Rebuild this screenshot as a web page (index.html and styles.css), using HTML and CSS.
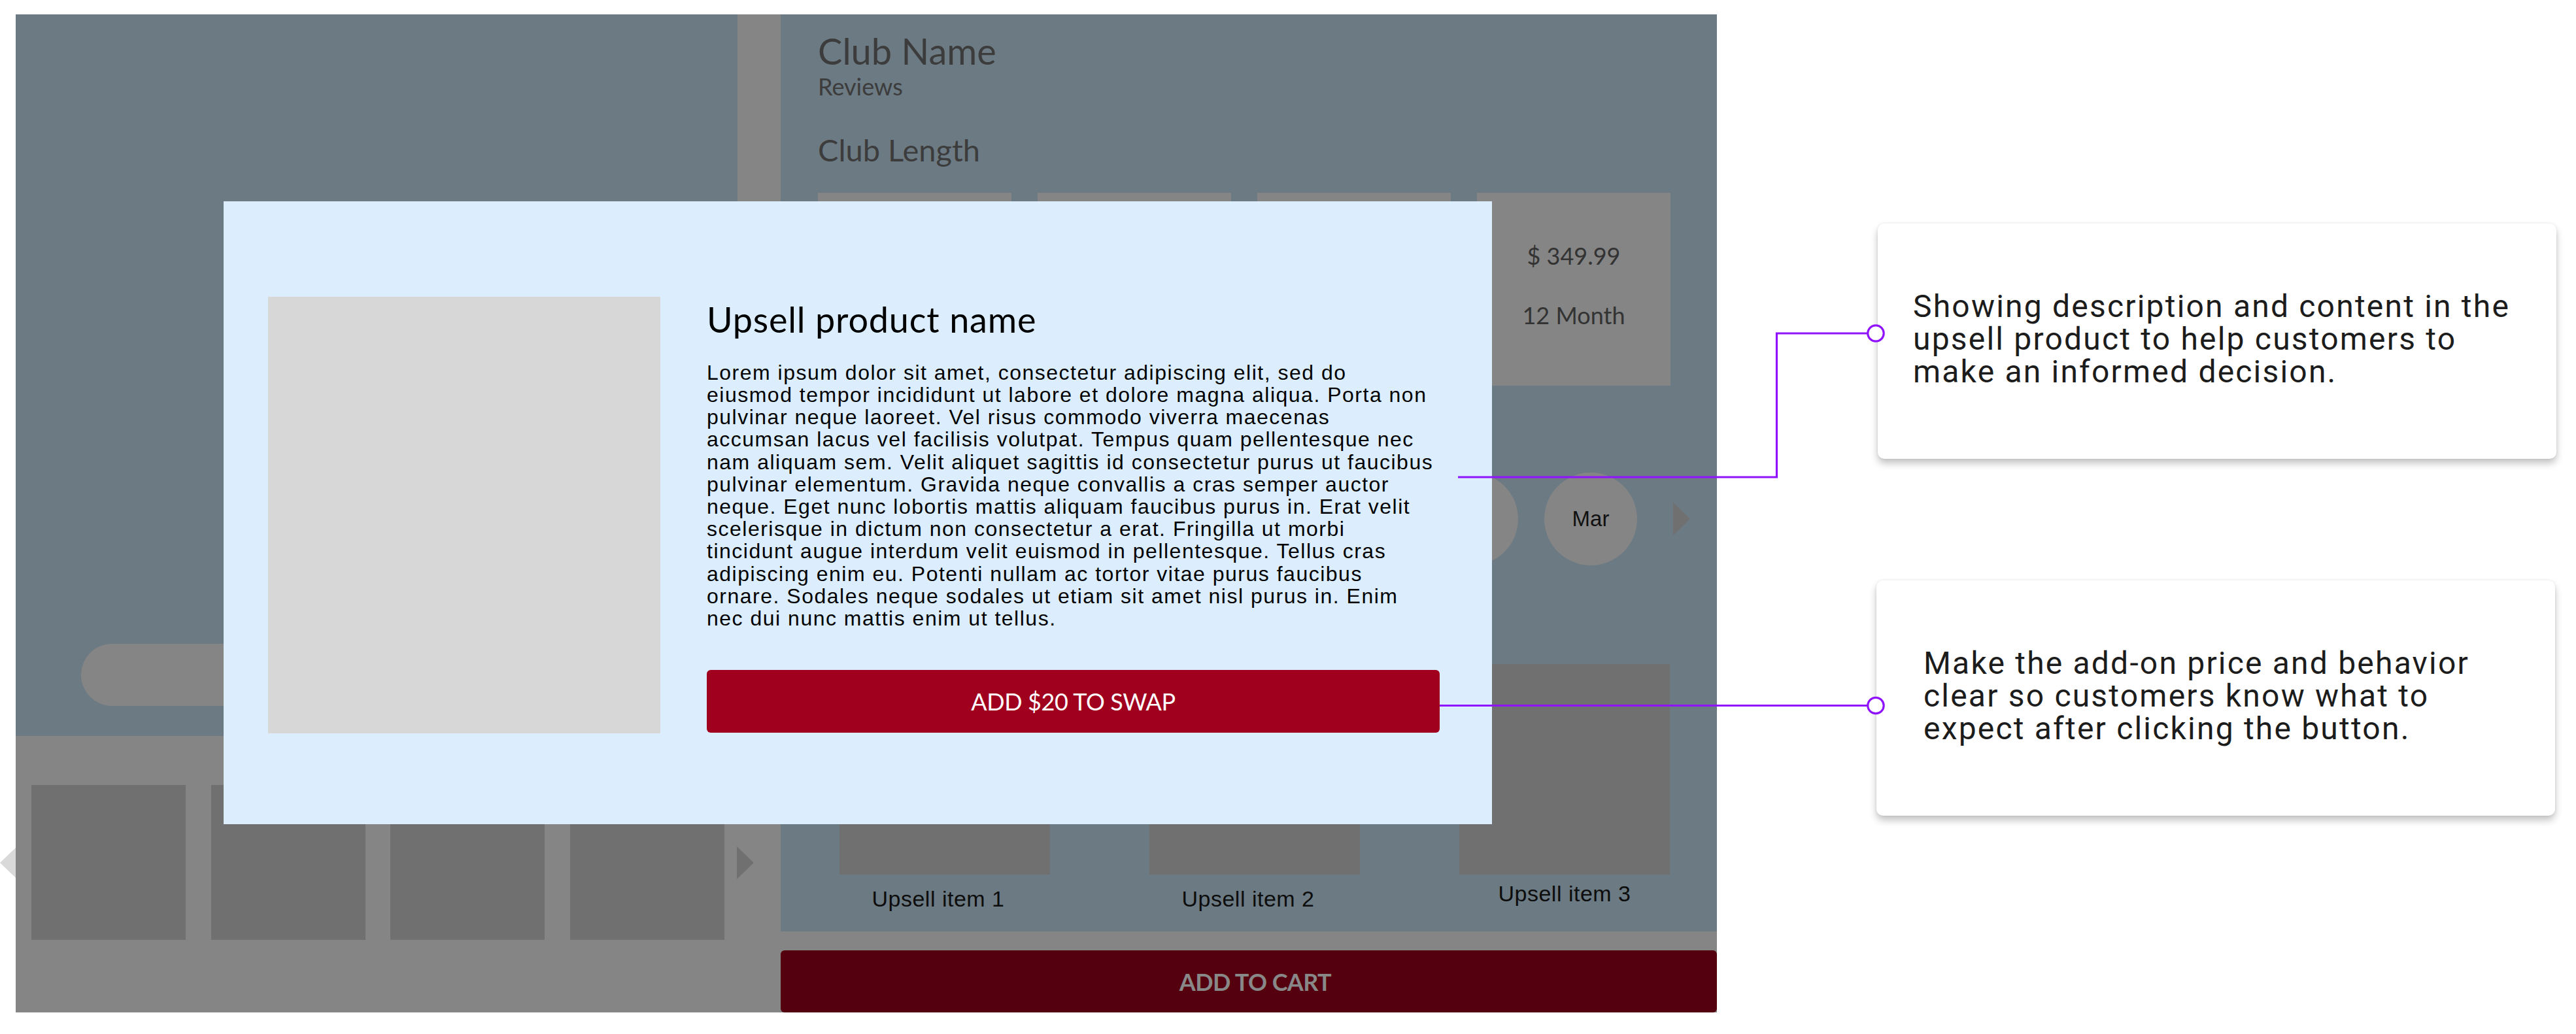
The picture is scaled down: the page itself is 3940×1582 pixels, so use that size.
FILE: index.html
```html
<!DOCTYPE html>
<html lang="en">
<head>
<meta charset="utf-8">
<title>Upsell modal annotations</title>
<link rel="stylesheet" href="styles.css">
</head>
<body>
<div class="page">
  <div class="mockup">
    <div class="left-col">
      <div class="hero"><div class="pill"></div></div>
      <div class="thumbs">
        <span class="arrow-left"></span>
        <div class="thumb"></div>
        <div class="thumb"></div>
        <div class="thumb"></div>
        <div class="thumb"></div>
        <span class="arrow-right"></span>
      </div>
    </div>
    <div class="right-col">
      <div class="panel">
        <h1 class="club-name">Club Name</h1>
        <div class="reviews">Reviews</div>
        <h2 class="club-length">Club Length</h2>
        <div class="lengths">
          <div class="len"></div>
          <div class="len"></div>
          <div class="len"></div>
          <div class="len len-info"><span>$ 349.99</span><span>12 Month</span></div>
        </div>
        <div class="months">
          <div class="month"></div>
          <div class="month"></div>
          <div class="month">Mar</div>
          <span class="arrow-right"></span>
        </div>
        <div class="upsells">
          <div class="upsell"><div class="upsell-img"></div><div class="upsell-label upsell-label-shift">Upsell item 1</div></div>
          <div class="upsell"><div class="upsell-img"></div><div class="upsell-label upsell-label-shift">Upsell item 2</div></div>
          <div class="upsell"><div class="upsell-img"></div><div class="upsell-label upsell-label-high">Upsell item 3</div></div>
        </div>
      </div>
      <button class="cart">ADD TO CART</button>
    </div>
    <div class="modal">
      <div class="modal-img"></div>
      <div class="modal-body">
        <h3 class="modal-title">Upsell product name</h3>
        <p class="modal-text">Lorem ipsum dolor sit amet, consectetur adipiscing elit, sed do<br>eiusmod tempor incididunt ut labore et dolore magna aliqua. Porta non<br>pulvinar neque laoreet. Vel risus commodo viverra maecenas<br>accumsan lacus vel facilisis volutpat. Tempus quam pellentesque nec<br>nam aliquam sem. Velit aliquet sagittis id consectetur purus ut faucibus<br>pulvinar elementum. Gravida neque convallis a cras semper auctor<br>neque. Eget nunc lobortis mattis aliquam faucibus purus in. Erat velit<br>scelerisque in dictum non consectetur a erat. Fringilla ut morbi<br>tincidunt augue interdum velit euismod in pellentesque. Tellus cras<br>adipiscing enim eu. Potenti nullam ac tortor vitae purus faucibus<br>ornare. Sodales neque sodales ut etiam sit amet nisl purus in. Enim<br>nec dui nunc mattis enim ut tellus.</p>
        <button class="swap">ADD $20 TO SWAP</button>
      </div>
    </div>
  </div>
  <div class="notes">
    <div class="note note-first"><p>Showing description and content in the<br>upsell product to help customers to<br>make an informed decision.</p></div>
    <div class="note note-second"><p>Make the add-on price and behavior<br>clear so customers know what to<br>expect after clicking the button.</p></div>
  </div>
  <svg class="links" width="3940" height="1582" viewBox="0 0 3940 1582" aria-hidden="true">
    <polyline points="2230,730 2717.5,730 2717.5,510 2857,510" fill="none" stroke="#9013fe" stroke-width="3.2"/>
    <circle cx="2869" cy="510" r="12.2" fill="#fff" stroke="#9013fe" stroke-width="3.2"/>
    <line x1="2202" y1="1079.5" x2="2857" y2="1079.5" stroke="#9013fe" stroke-width="3.2"/>
    <circle cx="2869" cy="1079.5" r="12.2" fill="#fff" stroke="#9013fe" stroke-width="3.2"/>
  </svg>
</div>
</body>
</html>
```

FILE: styles.css
```css
* { box-sizing: border-box; margin: 0; padding: 0; }
html, body { width: 3940px; height: 1582px; background: #fff; overflow: hidden; }
body { font-family: "Liberation Sans", Arial, sans-serif; color: #000; }

.page {
  position: relative;
  display: flex;
  align-items: flex-start;
  width: 3940px;
  height: 1582px;
  padding: 22px 0 0 24px;
}

.mockup {
  position: relative;
  display: flex;
  flex: none;
  width: 2602px;
  height: 1527px;
  background: #858585;
}

/* left column */
.left-col { display: flex; flex-direction: column; width: 1170px; flex: none; }
.hero {
  width: 1104px;
  height: 1104px;
  background: #6c7a83;
  display: flex;
  flex-direction: column;
  justify-content: flex-end;
  padding: 0 100px 46px;
}
.pill { height: 95px; border-radius: 48px; background: #858585; }

.thumbs { display: flex; align-items: center; margin: 75px 0 0 -24px; }
.thumb { width: 236px; height: 237px; background: #707070; flex: none; }
.thumb + .thumb { margin-left: 38.67px; }
.arrow-left {
  width: 0; height: 0; flex: none;
  border-right: 24px solid #d9d9d9;
  border-top: 23.5px solid transparent;
  border-bottom: 23.5px solid transparent;
  margin-right: 24px;
}
.arrow-right {
  width: 0; height: 0; flex: none;
  border-left: 26px solid #707070;
  border-top: 25.5px solid transparent;
  border-bottom: 25.5px solid transparent;
}
.thumbs .arrow-right { margin-left: 19px; }

/* right column */
.right-col { display: flex; flex-direction: column; width: 1432px; flex: none; }
.panel {
  height: 1403px;
  background: #6c7a83;
  padding: 0 72px 0 57px;
  display: flex;
  flex-direction: column;
}
.club-name { margin-top: 22px; font: 400 56px/1.2 Lato, sans-serif; color: #3c3c3c; }
.reviews { font: 400 36px/1.2 Lato, sans-serif; color: #3c3c3c; }
.club-length { margin-top: 47px; font: 400 47px/1.2 Lato, sans-serif; color: #3c3c3c; }

.lengths { display: flex; gap: 40px; margin-top: 37px; }
.len { width: 296px; height: 295px; background: #858585; flex: none; }
.len-info {
  display: flex;
  flex-direction: column;
  align-items: center;
  gap: 48px;
  padding-top: 75px;
  font: 400 36px/1.2 Lato, sans-serif;
  color: #333;
}

.months {
  display: flex;
  align-items: center;
  justify-content: flex-end;
  gap: 40px;
  margin: 133px -31px 0 0;
}
.month {
  width: 142px; height: 142px; border-radius: 50%;
  background: #858585;
  display: flex; align-items: center; justify-content: center;
  font-size: 33px; color: #111;
  flex: none;
}
.months .arrow-right { margin-left: 15px; }

.upsells { display: flex; gap: 152px; margin: 151px 0 0 33px; }
.upsell { width: 322px; display: flex; flex-direction: column; align-items: center; }
.upsell-img { width: 322px; height: 322px; background: #707070; }
.upsell-label {
  margin-top: 18.6px;
  font-size: 34px; line-height: 38px; letter-spacing: 0.5px;
  color: #0d0d0d; white-space: nowrap;
}
.upsell-label-shift { margin-right: 20px; }
.upsell-label-high { margin-top: 10.6px; }

.cart {
  margin-top: 29px;
  height: 95px;
  width: 1432px;
  border: 0;
  border-radius: 6px;
  padding-left: 20px;
  background: #55000f;
  color: #888;
  font: 700 36px/1 Lato, sans-serif;
  letter-spacing: -0.6px;
}

/* modal */
.modal {
  position: absolute;
  left: 318px;
  top: 286px;
  width: 1940px;
  height: 953px;
  background: #dceefd;
  display: flex;
  align-items: flex-start;
  gap: 71px;
  padding: 146px 80px 139px 68px;
}
.modal-img { width: 600px; height: 668px; background: #d7d7d7; flex: none; }
.modal-body { flex: 1; display: flex; flex-direction: column; padding-top: 3px; }
.modal-title { font: 400 54px/1.2 Lato, sans-serif; letter-spacing: 0.8px; color: #000; }
.modal-text {
  margin-top: 31px;
  font-size: 32px;
  line-height: 34.2px;
  letter-spacing: 1.5px;
  white-space: nowrap;
  color: #000;
}
.swap {
  margin-top: 62px;
  height: 96px;
  border: 0;
  border-radius: 6px;
  background: #a0001d;
  color: #fff;
  font: 400 36px/1 Lato, sans-serif;
  letter-spacing: -0.4px;
}

/* annotation cards */
.notes {
  display: flex;
  flex-direction: column;
  gap: 186px;
  margin-left: 246px;
  padding-top: 320px;
}
.note {
  width: 1038px;
  height: 360px;
  background: #fff;
  border-radius: 10px;
  box-shadow: 0 7px 12px rgba(0, 0, 0, 0.24), 0 0 4px rgba(0, 0, 0, 0.07);
  padding-top: 102px;
  font-family: Roboto, "Liberation Sans", sans-serif;
  font-size: 48px;
  line-height: 50px;
  letter-spacing: 2.2px;
  color: #1c1c1c;
  white-space: nowrap;
}
.note-first { padding-left: 54px; }
.note-second { padding-left: 72px; margin-left: -2px; }

.links { position: absolute; left: 0; top: 0; pointer-events: none; z-index: 5; }
```
